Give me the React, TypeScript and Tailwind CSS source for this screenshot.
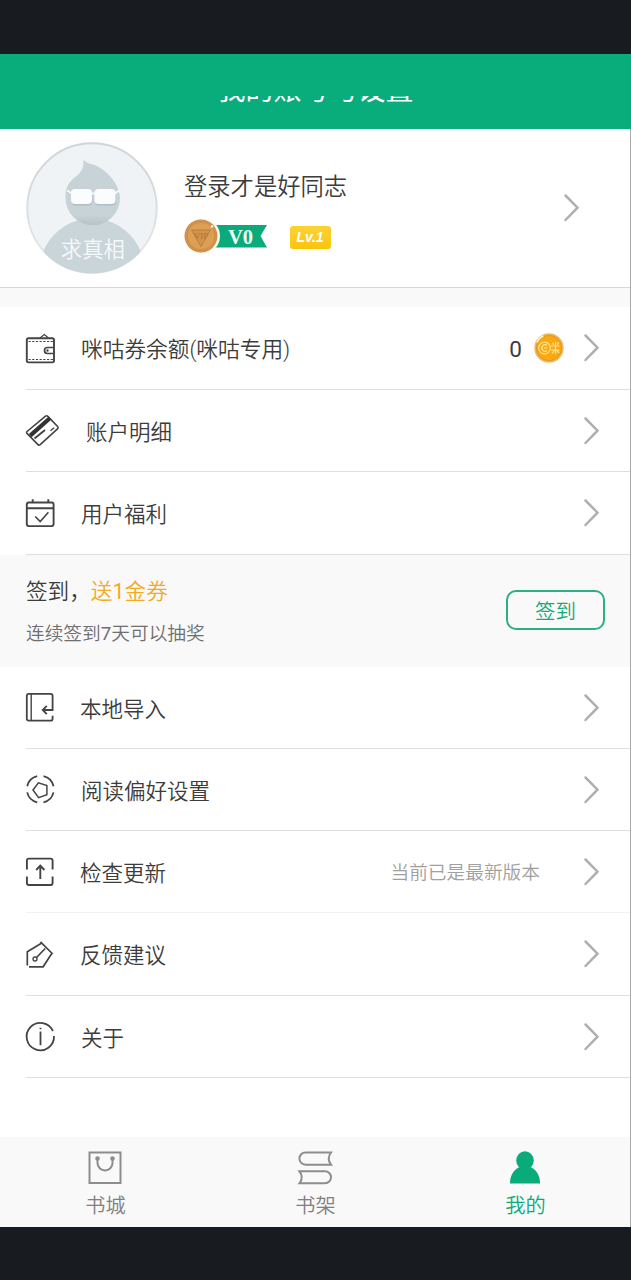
import type { ReactNode } from "react";

const icon = {
  width: 36,
  height: 36,
  viewBox: "0 0 36 36",
  fill: "none",
  stroke: "#444",
  strokeWidth: 1.9,
} as const;

const WalletIcon = () => (
  <svg {...icon}>
    <rect x="2.8" y="8.2" width="27.2" height="24.2" rx="1.8" />
    <path d="M16 8l4.300-3.400L24.500 8" strokeWidth="1.200" />
    <path d="M4.500 11.500H29M4.500 29.500H29" strokeWidth="1.200" strokeDasharray="2.200 1.500" />
    <path d="M29.500 17.500h-6a3 3 0 0 0 0 6h6" strokeWidth="1.700" />
    <circle cx="23.500" cy="20.500" r="0.600" strokeWidth="1.200" />
  </svg>
);

const CardIcon = () => (
  <svg {...icon} strokeLinejoin="round">
    <path d="M3 18.500L21.500 3.200q1.300-1 2.400.2l9.700 10.100q1.100 1.200-.1 2.300L16.200 31.700q-1.200 1-2.200-.1L3.200 20.600q-1.200-1.200-.2-2.100z" strokeWidth="1.600" />
    <path d="M25.800 5.300L6.200 22.600" stroke="#333" strokeWidth="4.200" />
    <path d="M10.500 25.400L21 17" strokeWidth="1.900" />
    <path d="M26.500 17.700l3.600-3" strokeWidth="1.400" />
  </svg>
);

const CalendarIcon = () => (
  <svg {...icon}>
    <rect x="2.800" y="7.500" width="26.800" height="23.600" rx="2" />
    <path d="M3 13.200h26.500M8.700 4.300v3.500M24.300 4.300v3.500" />
    <path d="M11.200 21.500l5 5 8.200-9.200" strokeWidth="1.600" />
  </svg>
);

const ImportIcon = () => (
  <svg {...icon} strokeWidth="1.800">
    <path d="M28.600 25.700v3q0 2-2 2H4.800q-2 0-2-2V5.800q0-2 2-2h21.800q2 0 2 2V20H19" />
    <path d="M7.200 4v26.500" strokeWidth="1.400" />
    <path d="M22.800 15.800L18.700 20l4.100 4.200" />
  </svg>
);

const PreferenceIcon = () => (
  <svg {...icon} strokeWidth="1.800">
    <path d="M19.500 4.200A13.500 13.500 0 0 1 29.500 14.200M29.500 20.400A13.500 13.500 0 0 1 19.500 30.400M13.200 30.400A13.500 13.500 0 0 1 3.200 20.400M3.200 14.200A13.500 13.500 0 0 1 13.200 4.200" />
    <path d="M9 18l5.400-7.200 8.500 2.800v9l-8.300 3z" strokeWidth="1.500" />
  </svg>
);

const UpdateIcon = () => (
  <svg {...icon}>
    <path d="M2.900 15.500V6.600q0-2 2-2h21.700q2 0 2 2v8.900M2.900 22.500V29q0 2 2 2h21.700q2 0 2-2v-6.500" />
    <path d="M16.300 25V11.700M12.200 16l4.100-4.300 4.100 4.300" />
  </svg>
);

const FeedbackIcon = () => (
  <svg {...icon} strokeWidth="1.700">
    <path d="M3.300 29.500V15.800L17.800 7.100M16.500 5.800L28.700 18M27.600 17.800l-8.500 13H5" />
    <circle cx="11" cy="23" r="2" strokeWidth="1.300" />
    <path d="M12.500 21.500l8.700-9" />
  </svg>
);

const AboutIcon = () => (
  <svg {...icon} strokeWidth="1.800">
    <path d="M28.900 12.200A13.700 13.700 0 1 0 30 17" />
    <path d="M16.500 12.600v13.600M16.500 8.700v1.600" />
  </svg>
);

const Chevron = () => (
  <svg width="18" height="30" viewBox="0 0 18 30" fill="none" stroke="#afafaf" strokeWidth="2.500" strokeLinecap="round" className="shrink-0">
    <path d="M3.500 2.500l12 12.200L3.500 27" />
  </svg>
);

const Coin = () => (
  <svg width="30" height="30" viewBox="0 0 30 30" fill="none" className="shrink-0">
    <circle cx="15" cy="15" r="14.700" fill="#f0bb5c" />
    <circle cx="15" cy="15" r="12.700" fill="#faa814" stroke="#e0932a" strokeWidth="1" />
    <path d="M3 9.500Q5 4.500 9.500 3" stroke="#fff4d0" strokeWidth="1.500" />
    <g stroke="#ffe48b" strokeWidth="1.200">
      <circle cx="10.500" cy="15" r="5.800" />
      <path d="M13 12.500a3.200 3.200 0 1 0 0 5M9.800 14.800h3.500" />
      <path d="M21.500 9v12M17 13h8.500M17 17h8.500M18.500 9.500l1 2.500M24.500 9l-1 3M20.500 17l-2.500 3.500M22.500 17l2.500 3" />
    </g>
  </svg>
);

const Avatar = () => (
  <svg width="132" height="132" viewBox="0 0 132 132" className="shrink-0">
    <defs>
      <clipPath id="disc">
        <circle cx="66" cy="66" r="65.500" />
      </clipPath>
      <linearGradient id="rim" x1="0" y1="0" x2="0" y2="1">
        <stop offset="0" stopColor="#d0d4d6" />
        <stop offset="1" stopColor="#e6eaec" />
      </linearGradient>
      <linearGradient id="shade" x1="0" y1="0" x2="0" y2="1">
        <stop offset="0.850" stopColor="#c8d3d8" />
        <stop offset="1" stopColor="#b6c2c8" />
      </linearGradient>
    </defs>
    <circle cx="66" cy="66" r="64.700" fill="#eff3f6" stroke="url(#rim)" strokeWidth="2" />
    <g clipPath="url(#disc)">
      <circle cx="66" cy="129" r="52.500" fill="#cad5da" />
      <path d="M57.500 17.500q2.500 3.500 9.500 5C81 27 94 43 94 56A27 27 0 0 1 39.500 56C39 47 42 41 48 36Q59 29 57.500 17.500z" fill="url(#shade)" />
    </g>
    <g fill="#b2bec4" transform="translate(.5 1.500)">
      <rect x="45" y="47" width="21" height="15" rx="4" />
      <rect x="68.500" y="47" width="21" height="15" rx="4" />
    </g>
    <path d="M41 48.500l5 3M93.500 48.500l-5 3M65 51.500h5" stroke="#f7fafb" strokeWidth="1.800" />
    <rect x="45" y="47" width="21" height="15" rx="4" fill="#fafcfd" />
    <rect x="68.500" y="47" width="21" height="15" rx="4" fill="#fafcfd" />
    <text x="66.800" y="115" textAnchor="middle" fontSize="21.300" fill="#f6f9fa">求真相</text>
  </svg>
);

const VipBadge = () => (
  <svg width="84" height="34" viewBox="0 0 84 34">
    <path d="M30 6h53l-6.500 11L83 28.500H30z" fill="#0aab7b" />
    <circle cx="18" cy="17" r="18" fill="#fffbf2" />
    <circle cx="17" cy="17" r="16.500" fill="#d1914f" />
    <circle cx="17" cy="17" r="13.800" fill="#dba055" stroke="#cc8a45" strokeWidth="0.800" />
    <path d="M7.500 11h19L17 27.500z" fill="#d39349" stroke="#bd7f3e" strokeWidth="1" />
    <text x="17" y="20" textAnchor="middle" fontSize="9" fontFamily="Liberation Serif, serif" fill="#ad7237">VIP</text>
    <circle cx="28" cy="7.500" r="1.300" fill="#fff3dc" />
    <text x="44" y="24.500" fontSize="20.500" fontWeight="700" fontFamily="Liberation Serif, serif" fill="#e9fbf5">V0</text>
  </svg>
);

type RowProps = {
  icon: ReactNode;
  label: string;
  indent?: string;
  size?: string;
  tall?: boolean;
  line?: string;
  children?: ReactNode;
};

const Row = ({
  icon,
  label,
  indent = "ml-[21px]",
  size = "text-[21.500px]",
  tall = false,
  line = "border-[#dedede]",
  children,
}: RowProps) => (
  <div className={`${tall ? "h-[83px]" : "h-[82px]"} shrink-0 pl-[26px]`}>
    <div className={`flex h-full items-start border-b ${line}`}>
      <span className="-ml-0.5 mt-[23px] shrink-0">{icon}</span>
      <span className={`${indent} ${size} mt-[25px] whitespace-nowrap leading-9`}>{label}</span>
      <div className="ml-auto mr-[30px] mt-[23px] flex h-9 items-center">
        {children}
        <Chevron />
      </div>
    </div>
  </div>
);

const BagIcon = () => (
  <svg width="36" height="36" viewBox="0 0 36 36" fill="none" stroke="#8d8d8d" strokeWidth="2">
    <path d="M2.500 3.500h31v30.500h-31z" />
    <path d="M10.500 9v5a7.500 7.500 0 0 0 15 0V9" />
    <circle cx="10.500" cy="9.500" r="1.300" fill="#8d8d8d" />
    <circle cx="25.500" cy="9.500" r="1.300" fill="#8d8d8d" />
  </svg>
);

const BooksIcon = () => (
  <svg width="36" height="36" viewBox="0 0 36 36" fill="none" stroke="#8d8d8d" strokeWidth="2">
    <path d="M34 3.500H8.500a6 6 0 0 0 0 12.200H34q-4.500-6.100 0-12.200z" />
    <path d="M2.500 22.300h25.500a6 6 0 0 1 0 12H2.500q4.500-6 0-12z" />
  </svg>
);

const PersonIcon = () => (
  <svg width="36" height="36" viewBox="0 0 36 36" fill="#0aab7b">
    <ellipse cx="18" cy="11.500" rx="8.800" ry="9.200" />
    <path d="M12 18.300h12c6 3 9 9 9 16.200H3c0-7.200 3-13.200 9-16.200z" />
  </svg>
);

const Tab = ({ icon, label, color }: { icon: ReactNode; label: string; color: string }) => (
  <button className={`flex flex-1 flex-col items-center pt-3 font-[350] ${color}`}>
    {icon}
    <span className="mt-1.5 pl-px text-[20.200px] leading-[30px]">{label}</span>
  </button>
);

export default function App() {
  return (
    <div className="flex h-[1280px] w-[631px] flex-col bg-[#181c20] pt-[54px] font-[Roboto,'Noto_Sans_CJK_SC',sans-serif] font-[350] text-[#3c3c3c]">
      <header className="h-[75px] shrink-0 bg-[#08ad7b] pt-[42px]">
        <div className="h-[33px] overflow-hidden">
          <h1 className="-mt-[25px] text-center text-[28px] font-normal leading-10 text-white">我的账号与设置</h1>
        </div>
      </header>

      <main className="flex h-[1098px] shrink-0 flex-col border-r border-[#aaa] bg-white">
        <section className="flex h-[159px] shrink-0 items-start border-b border-[#d8d8d8] pl-[26px] pt-[13px]">
          <Avatar />
          <div className="ml-[26px] mt-[27px]">
            <div className="h-9 text-[23.300px] leading-9">登录才是好同志</div>
            <div className="mt-[14px] flex items-center">
              <VipBadge />
              <span className="ml-[22px] mt-0.5 flex h-[23px] w-[41px] items-center justify-center rounded-[3px] bg-linear-to-b from-[#fbd333] to-[#fcc407] pr-px font-['Liberation_Sans',sans-serif] text-[14px] font-bold italic text-white">
                Lv.1
              </span>
            </div>
          </div>
          <div className="ml-auto mr-[50px] mt-[51px]">
            <Chevron />
          </div>
        </section>
        <div className="h-[19px] shrink-0 bg-[#f9f9f9]" />

        <Row icon={<WalletIcon />} label="咪咕券余额(咪咕专用)" size="text-[21.700px]" tall>
          <span className="mr-3 pt-[3px] text-[22.500px] font-normal">0</span>
          <Coin />
          <span className="w-[18px]" />
        </Row>
        <Row icon={<CardIcon />} label="账户明细" indent="ml-[26px]" />
        <Row icon={<CalendarIcon />} label="用户福利" tall />

        <section className="flex h-[112px] shrink-0 items-start justify-between bg-[#f9f9f9] pl-[26px] pr-[25px]">
          <div className="pt-[21px]">
            <div className="text-[21.600px] leading-8">
              签到，
              <span className="text-[#f2ab1d]">
                送<span className="font-normal">1</span>金券
              </span>
            </div>
            <div className="mt-3 text-[18.700px] leading-7 text-[#6f6f6f]">
              连续签到<span className="font-normal">7</span>天可以抽奖
            </div>
          </div>
          <button className="mt-[35px] h-10 w-[99px] rounded-[10px] border-2 border-[#2bb085] pt-0.5 text-[20.500px] leading-9 text-[#17a87b]">
            签到
          </button>
        </section>

        <Row icon={<ImportIcon />} label="本地导入" indent="ml-5" />
        <Row icon={<PreferenceIcon />} label="阅读偏好设置" indent="ml-[21px]" />
        <Row icon={<UpdateIcon />} label="检查更新" indent="ml-5" line="border-[#f2f2f2]">
          <span className="mr-[42px] pt-0.5 text-[18.700px] text-[#a0a0a0]">当前已是最新版本</span>
        </Row>
        <Row icon={<FeedbackIcon />} label="反馈建议" indent="ml-5" tall />
        <Row icon={<AboutIcon />} label="关于" />

        <nav className="mt-auto flex h-[90px] shrink-0 bg-[#f9f9f9]">
          <Tab icon={<BagIcon />} label="书城" color="text-[#808080]" />
          <Tab icon={<BooksIcon />} label="书架" color="text-[#808080]" />
          <Tab icon={<PersonIcon />} label="我的" color="text-[#0aab7b]" />
        </nav>
      </main>
    </div>
  );
}
